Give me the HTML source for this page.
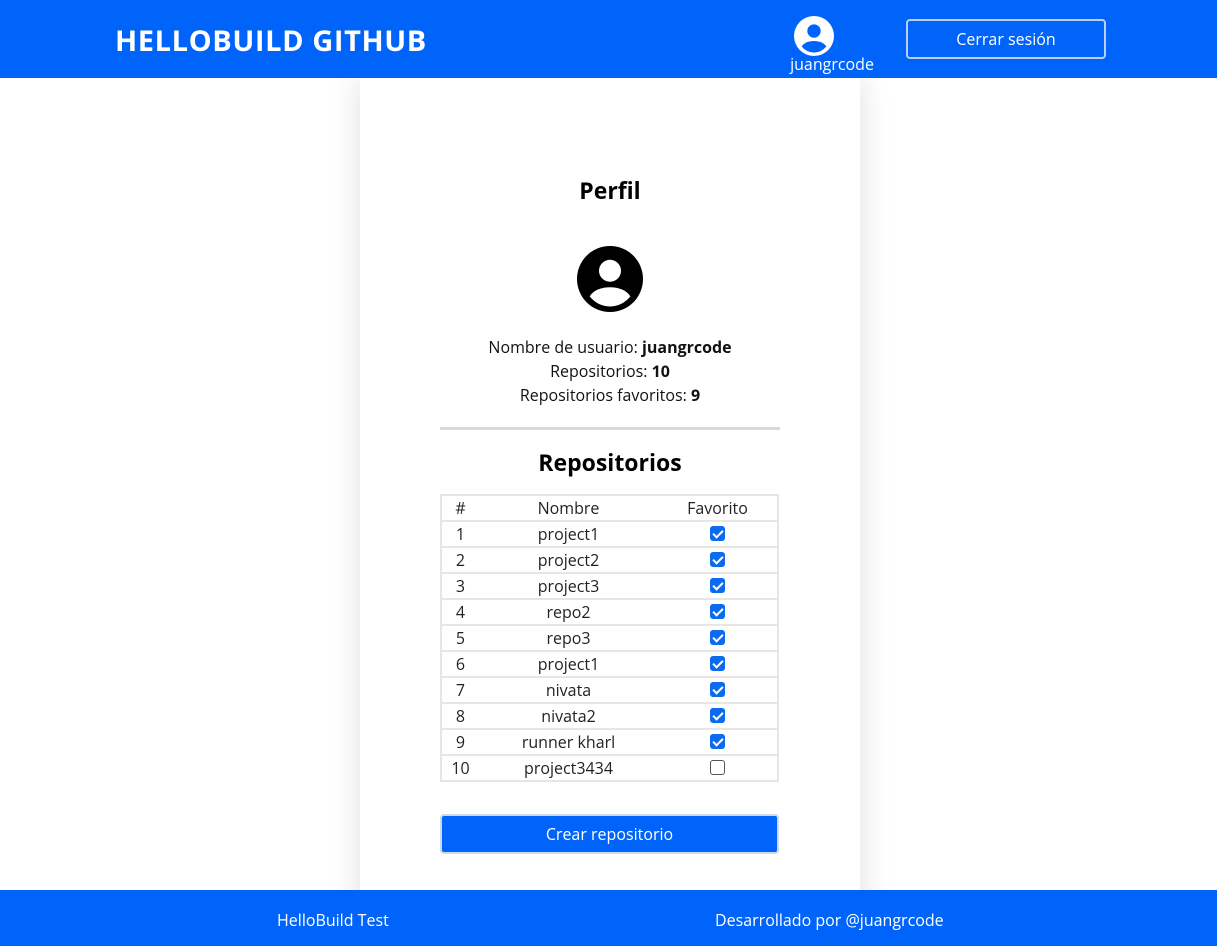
<!DOCTYPE html>
<html><head><meta charset="utf-8"><style>
*{box-sizing:border-box;margin:0;padding:0}
body{width:1217px;height:946px;overflow:hidden;background:#fff;font-family:"Open Sans","Liberation Sans",sans-serif;position:relative}
.hdr{position:absolute;left:0;top:0;width:1217px;height:78px;background:#0064fa;color:#fff}
.logo{position:absolute;left:115px;top:21px;font-size:29px;font-weight:bold;letter-spacing:0.6px}
.user{position:absolute;left:786px;top:16px;width:92px;text-align:center;font-size:16px}
.user svg{display:block;margin:0 0 0 8px}
.btn1{position:absolute;left:906px;top:19px;width:200px;height:40px;border:2px solid #b9d0f5;border-radius:4px;color:#fff;font-size:16px;text-align:center;line-height:36px}
.card{position:absolute;left:360px;top:78px;width:500px;height:856px;background:#fff;box-shadow:0 0 30px rgba(0,0,0,.13)}
h2{position:absolute;width:100%;text-align:center;font-size:23px;font-weight:bold;color:#000}
.info{position:absolute;width:100%;text-align:center;font-size:16px;line-height:24px;color:#111}
hr{position:absolute;left:80px;top:349px;width:340px;border:0;border-top:3px solid #d8d8d8}
table{position:absolute;left:80px;top:416px;width:339px;border-collapse:collapse;font-size:16px;color:#222;border:2px solid #e6e6e6;table-layout:fixed}
td{border-top:2px solid #e6e6e6;height:26px;text-align:center;padding:0;line-height:22px}
.cb{display:inline-block;width:15px;height:15px;border-radius:3px;background:#0b6bf0;vertical-align:-1px;position:relative}
.cb:after{content:"";position:absolute;left:5px;top:1.5px;width:4px;height:8px;border:solid #fff;border-width:0 2px 2px 0;transform:rotate(45deg)}
.cb.no{background:#fff;border:1px solid #555}.cb.no:after{display:none}
.btn2{position:absolute;left:80px;top:736px;width:339px;height:40px;background:#0064fa;border:2px solid #cfd8e6;border-radius:4px;color:#fff;text-align:center;line-height:36px;font-size:16px}
.ftr{position:absolute;left:0;top:890px;width:1217px;height:56px;background:#0064fa;color:#fff;font-size:16px}
</style></head><body>
<div class="card">
<h2 style="top:96px">Perfil</h2>
<svg style="position:absolute;left:217px;top:168px" width="66" height="66" viewBox="0 0 24 24"><circle cx="12" cy="12" r="12" fill="#000"/><circle cx="12" cy="9" r="4" fill="#fff"/><path d="M4.6 18.3C6 16 9 15 12 15s6 1 7.4 3.3A10 10 0 0 1 12 22a10 10 0 0 1-7.4-3.7z" fill="#fff"/><circle cx="12" cy="12" r="11.2" fill="none" stroke="#000" stroke-width="1.2"/></svg>
<div class="info" style="top:257px">Nombre de usuario: <b>juangrcode</b><br>Repositorios: <b>10</b><br>Repositorios favoritos: <b>9</b></div>
<hr>
<h2 style="top:368px">Repositorios</h2>
<table>
<tr><td style="width:38px;border-top:0">#</td><td style="border-top:0">Nombre</td><td style="width:120px;border-top:0">Favorito</td></tr>
<tr><td>1</td><td>project1</td><td><span class="cb"></span></td></tr>
<tr><td>2</td><td>project2</td><td><span class="cb"></span></td></tr>
<tr><td>3</td><td>project3</td><td><span class="cb"></span></td></tr>
<tr><td>4</td><td>repo2</td><td><span class="cb"></span></td></tr>
<tr><td>5</td><td>repo3</td><td><span class="cb"></span></td></tr>
<tr><td>6</td><td>project1</td><td><span class="cb"></span></td></tr>
<tr><td>7</td><td>nivata</td><td><span class="cb"></span></td></tr>
<tr><td>8</td><td>nivata2</td><td><span class="cb"></span></td></tr>
<tr><td>9</td><td>runner kharl</td><td><span class="cb"></span></td></tr>
<tr><td>10</td><td>project3434</td><td><span class="cb no"></span></td></tr>
</table>
<div class="btn2">Crear repositorio</div>
</div>
<div class="hdr">
<div class="logo">HELLOBUILD GITHUB</div>
<div class="user"><svg width="40" height="40" viewBox="0 0 24 24"><circle cx="12" cy="12" r="12" fill="#fff"/><circle cx="12" cy="9" r="4" fill="#0064fa"/><path d="M4.6 18.3C6 16 9 15 12 15s6 1 7.4 3.3A10 10 0 0 1 12 22a10 10 0 0 1-7.4-3.7z" fill="#0064fa"/></svg><div style="margin-top:-3px">juangrcode</div></div>
<div class="btn1">Cerrar sesión</div>
</div>
<div class="ftr"><span style="position:absolute;left:277px;top:19px">HelloBuild Test</span><span style="position:absolute;left:715px;top:19px">Desarrollado por @juangrcode</span></div>
</body></html>
